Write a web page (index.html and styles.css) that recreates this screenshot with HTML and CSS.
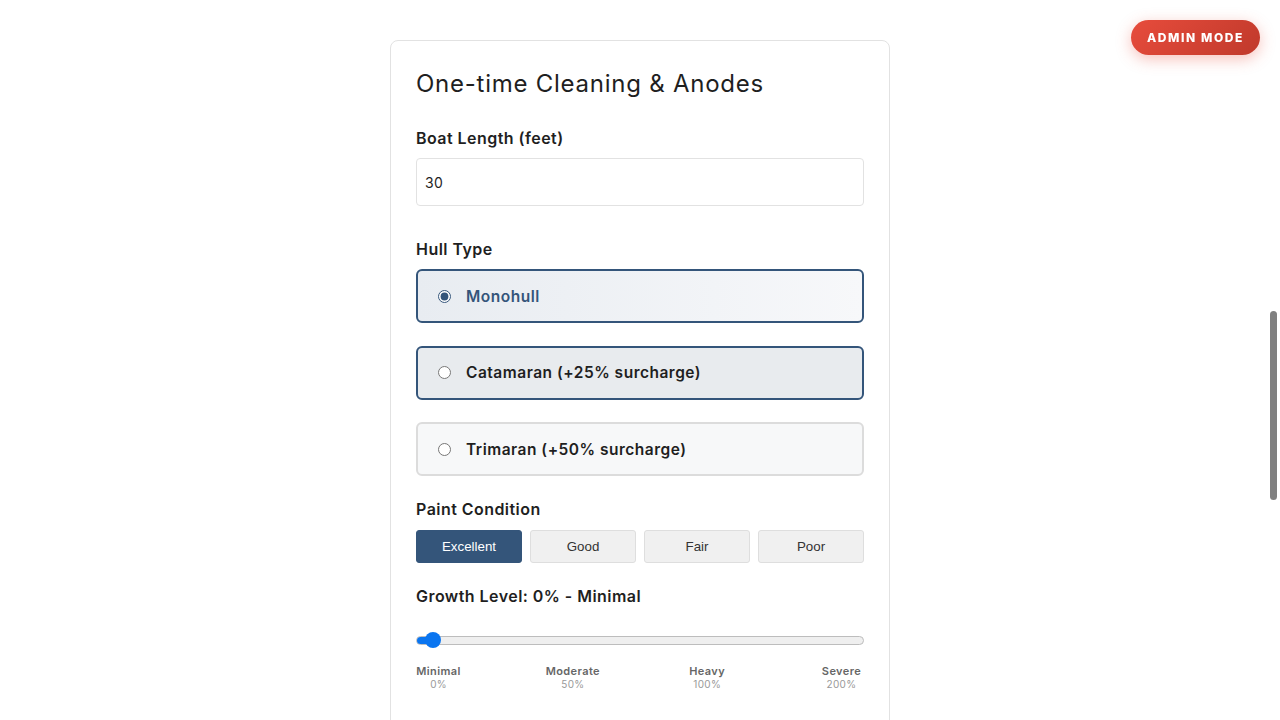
FILE: index.html
```html
<!DOCTYPE html>
<html lang="en">
<head>
<meta charset="utf-8">
<title>One-time Cleaning &amp; Anodes</title>
<link rel="stylesheet" href="styles.css">
</head>
<body>
<button class="admin-btn" type="button">Admin Mode</button>
<main class="card">
  <h1 class="title">One-time Cleaning &amp; Anodes</h1>

  <div class="field field-len">
    <label class="label" for="len">Boat Length (feet)</label>
    <input class="text-input" id="len" type="text" value="30">
  </div>

  <div class="field field-hull">
    <div class="label">Hull Type</div>
    <div class="options">
      <label class="option option-selected">
        <input type="radio" name="hull" checked>
        <span>Monohull</span>
      </label>
      <label class="option option-hover">
        <input type="radio" name="hull">
        <span>Catamaran (+25% surcharge)</span>
      </label>
      <label class="option">
        <input type="radio" name="hull">
        <span>Trimaran (+50% surcharge)</span>
      </label>
    </div>
  </div>

  <div class="field field-paint">
    <div class="label label-paint">Paint Condition</div>
    <div class="segments">
      <button class="seg seg-active" type="button">Excellent</button>
      <button class="seg" type="button">Good</button>
      <button class="seg" type="button">Fair</button>
      <button class="seg" type="button">Poor</button>
    </div>
  </div>

  <div class="field">
    <div class="label">Growth Level: 0% - Minimal</div>
    <div class="slider">
      <div class="track"><div class="fill"></div></div>
      <div class="thumb"></div>
    </div>
    <div class="ticks">
      <div class="tick"><span class="tick-name">Minimal</span><span class="tick-val">0%</span></div>
      <div class="tick"><span class="tick-name">Moderate</span><span class="tick-val">50%</span></div>
      <div class="tick"><span class="tick-name">Heavy</span><span class="tick-val">100%</span></div>
      <div class="tick"><span class="tick-name">Severe</span><span class="tick-val">200%</span></div>
    </div>
  </div>
</main>
<div class="scrollbar"></div>
</body>
</html>
```

FILE: styles.css
```css
* { box-sizing: border-box; }
html, body { margin: 0; padding: 0; }
body {
  background: #fff;
  font-family: "Inter", "Noto Sans", sans-serif;
  color: #1f1f1f;
  height: 720px;
  overflow: hidden;
}

.admin-btn {
  position: fixed;
  top: 20px;
  right: 20px;
  width: 129px;
  height: 35px;
  border: none;
  border-radius: 18px;
  background: linear-gradient(135deg, #e74c3c, #c0392b);
  color: #fff;
  font-family: "Inter", sans-serif;
  font-weight: 800;
  font-size: 12px;
  letter-spacing: 1.6px;
  text-transform: uppercase;
  padding: 0;
  box-shadow: 0 4px 15px rgba(231, 76, 60, 0.35);
}

.card {
  width: 500px;
  margin: 40px auto 0;
  border: 1px solid #e2e2e2;
  border-radius: 8px;
  padding: 27px 25px 40px;
  min-height: 700px;
}

.title {
  margin: 0 0 28px;
  font-size: 24px;
  font-weight: 400;
  letter-spacing: 0.75px;
  color: #1f1f1f;
  line-height: 32px;
}

.field { margin-bottom: 30px; }
.field-len { margin-bottom: 33px; }
.field-hull { margin-bottom: 23px; }
.field-paint { margin-bottom: 23px; }

.label {
  display: block;
  font-size: 16px;
  font-weight: 600;
  letter-spacing: 0.45px;
  color: #1f1f1f;
  line-height: 20px;
  margin-bottom: 10px;
}
.label-paint { margin-bottom: 11px; }

.text-input {
  display: block;
  width: 100%;
  height: 48px;
  border: 1px solid #e2e2e2;
  border-radius: 4px;
  padding: 0 8px;
  font-family: inherit;
  font-size: 14px;
  letter-spacing: 0.3px;
  color: #1f1f1f;
  background: #fff;
}

.options {
  display: flex;
  flex-direction: column;
  gap: 22.5px;
}

.option {
  display: flex;
  align-items: center;
  gap: 15px;
  height: 54px;
  padding: 0 20px;
  border: 2px solid #dcdcdc;
  border-radius: 6px;
  background: #f7f8f9;
  font-size: 15.5px;
  font-weight: 600;
  letter-spacing: 0.5px;
  color: #1f1f1f;
}
.option input {
  margin: 0;
  width: 13px;
  height: 13px;
  accent-color: #34557a;
}
.option-selected {
  border-color: #34557a;
  background: linear-gradient(90deg, #e8ecf1, #f7f8fa);
  color: #34557a;
}
.option-hover {
  border-color: #34557a;
  background: #e8ebee;
}

.segments {
  display: grid;
  grid-template-columns: repeat(4, 1fr);
  gap: 8px;
}
.seg {
  height: 33px;
  border: 1px solid #dedede;
  border-radius: 3px;
  background: #f0f0f0;
  color: #333;
  font-family: "Liberation Sans", Arial, sans-serif;
  font-size: 13.33px;
}
.seg-active {
  background: #34557a;
  border-color: #34557a;
  color: #fff;
}

.slider {
  position: relative;
  height: 20px;
  margin-top: 24px;
}
.track {
  position: absolute;
  left: 0;
  right: 0;
  top: 6px;
  height: 9px;
  border: 1px solid #bdbdbd;
  border-radius: 5px;
  background: #efefef;
  overflow: hidden;
}
.fill {
  width: 17px;
  height: 100%;
  background: #0a75f0;
}
.thumb {
  position: absolute;
  left: 9px;
  top: 2px;
  width: 16px;
  height: 16px;
  border-radius: 50%;
  background: #0a75f0;
}

.ticks {
  display: flex;
  justify-content: space-between;
  margin-top: 14px;
}
.tick {
  width: 45px;
  display: flex;
  flex-direction: column;
  align-items: center;
  white-space: nowrap;
}
.tick-name {
  font-size: 11px;
  font-weight: 600;
  letter-spacing: 0.4px;
  color: #666;
  line-height: 14px;
}
.tick-val {
  font-size: 10px;
  color: #999;
  letter-spacing: 0.3px;
  line-height: 12px;
}

.scrollbar {
  position: fixed;
  right: 3px;
  top: 311px;
  width: 7px;
  height: 189px;
  border-radius: 4px;
  background: #808080;
}
```
